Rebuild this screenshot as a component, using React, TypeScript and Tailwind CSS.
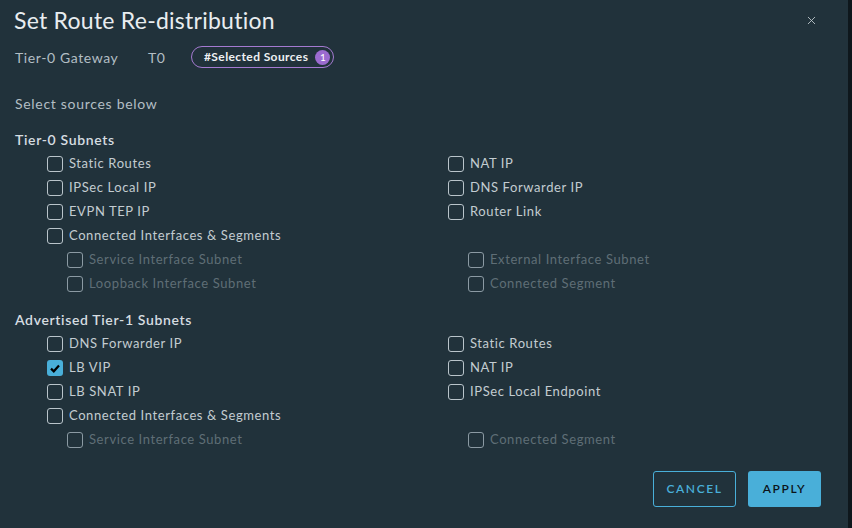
import { X } from "lucide-react";

type Item = { label: string; checked?: boolean; disabled?: boolean; nested?: boolean } | null;

function CheckRow({ item }: { item: Item }) {
  if (!item) return <div className="h-6" />;
  return (
    <div className={`flex h-6 items-center ${item.nested ? "pl-5" : ""}`}>
      <span
        className={`flex h-4 w-4 shrink-0 items-center justify-center rounded-[3px] ${
          item.checked ? "bg-[#49afd9]" : item.disabled ? "border border-[#8b9aa3]" : "border border-[#b9c4ca]"
        }`}
      >
        {item.checked ? (
          <svg width="10" height="9" viewBox="0 0 10 9">
            <path d="M1 4.6 L3.8 7.3 L9 1.6" fill="none" stroke="#000" strokeWidth="2.2" />
          </svg>
        ) : null}
      </span>
      <span
        className={`ml-[6px] text-[13px] tracking-[0.6px] ${item.disabled ? "text-[#5f6e76]" : "text-[#c3ccd1]"}`}
      >
        {item.label}
      </span>
    </div>
  );
}

function Section({ title, left, right }: { title: string; left: Item[]; right: Item[] }) {
  return (
    <div>
      <h3 className="h-6 text-[14px] font-semibold leading-6 tracking-[0.65px] text-[#d6dde1]">{title}</h3>
      <div className="grid grid-cols-[401px_1fr] pl-8">
        <div>
          {left.map((it, i) => (
            <CheckRow key={i} item={it} />
          ))}
        </div>
        <div>
          {right.map((it, i) => (
            <CheckRow key={i} item={it} />
          ))}
        </div>
      </div>
    </div>
  );
}

export default function App() {
  const tier0Left: Item[] = [
    { label: "Static Routes" },
    { label: "IPSec Local IP" },
    { label: "EVPN TEP IP" },
    { label: "Connected Interfaces & Segments" },
    { label: "Service Interface Subnet", nested: true, disabled: true },
    { label: "Loopback Interface Subnet", nested: true, disabled: true },
  ];
  const tier0Right: Item[] = [
    { label: "NAT IP" },
    { label: "DNS Forwarder IP" },
    { label: "Router Link" },
    null,
    { label: "External Interface Subnet", nested: true, disabled: true },
    { label: "Connected Segment", nested: true, disabled: true },
  ];
  const tier1Left: Item[] = [
    { label: "DNS Forwarder IP" },
    { label: "LB VIP", checked: true },
    { label: "LB SNAT IP" },
    { label: "Connected Interfaces & Segments" },
    { label: "Service Interface Subnet", nested: true, disabled: true },
  ];
  const tier1Right: Item[] = [
    { label: "Static Routes" },
    { label: "NAT IP" },
    { label: "IPSec Local Endpoint" },
    null,
    { label: "Connected Segment", nested: true, disabled: true },
  ];

  return (
    <div className="flex h-[528px] w-[852px] bg-[#0e171c] font-['Lato',sans-serif]">
      <div className="flex w-[848px] flex-col bg-[#21323b] px-[15px]">
        <div className="flex items-start justify-between pt-[5px]">
          <h1 className="-ml-px text-[23px] leading-[30px] tracking-[0.25px] text-[#e9edf0]">Set Route Re-distribution</h1>
          <X className="mr-[15px] mt-[9px] h-[13px] w-[13px] text-[#c3ccd1]" strokeWidth={1.6} />
        </div>
        <div className="mt-[11px] flex items-center text-[14px] tracking-[0.6px] text-[#b3bec4]">
          <span className="w-[133px]">Tier-0 Gateway</span>
          <span className="w-[43px]">T0</span>
          <span className="flex h-[22px] items-center rounded-full border border-[#a47ad1] pl-[12px] pr-[3px] text-[12px] font-bold tracking-[0.4px] text-[#eef1f3]">
            #Selected Sources
            <span className="ml-[7px] flex h-[15px] w-[15px] items-center justify-center rounded-full bg-[#9b6bcf] text-[10px] font-normal tracking-normal text-white">
              1
            </span>
          </span>
        </div>
        <p className="mt-[25px] text-[14px] tracking-[0.7px] text-[#b3bec4]">Select sources below</p>
        <div className="mt-[14px]">
          <Section title="Tier-0 Subnets" left={tier0Left} right={tier0Right} />
        </div>
        <div className="mt-[12px]">
          <Section title="Advertised Tier-1 Subnets" left={tier1Left} right={tier1Right} />
        </div>
        <div className="mt-auto mb-[21px] flex justify-end gap-3 pr-[12px]">
          <button className="h-9 w-[83px] rounded-[3px] border border-[#49afd9] text-[12px] font-semibold tracking-[1.6px] text-[#49afd9]">
            CANCEL
          </button>
          <button className="h-9 w-[73px] rounded-[3px] bg-[#49afd9] text-[12px] font-semibold tracking-[1.6px] text-[#0c1419]">
            APPLY
          </button>
        </div>
      </div>
    </div>
  );
}
